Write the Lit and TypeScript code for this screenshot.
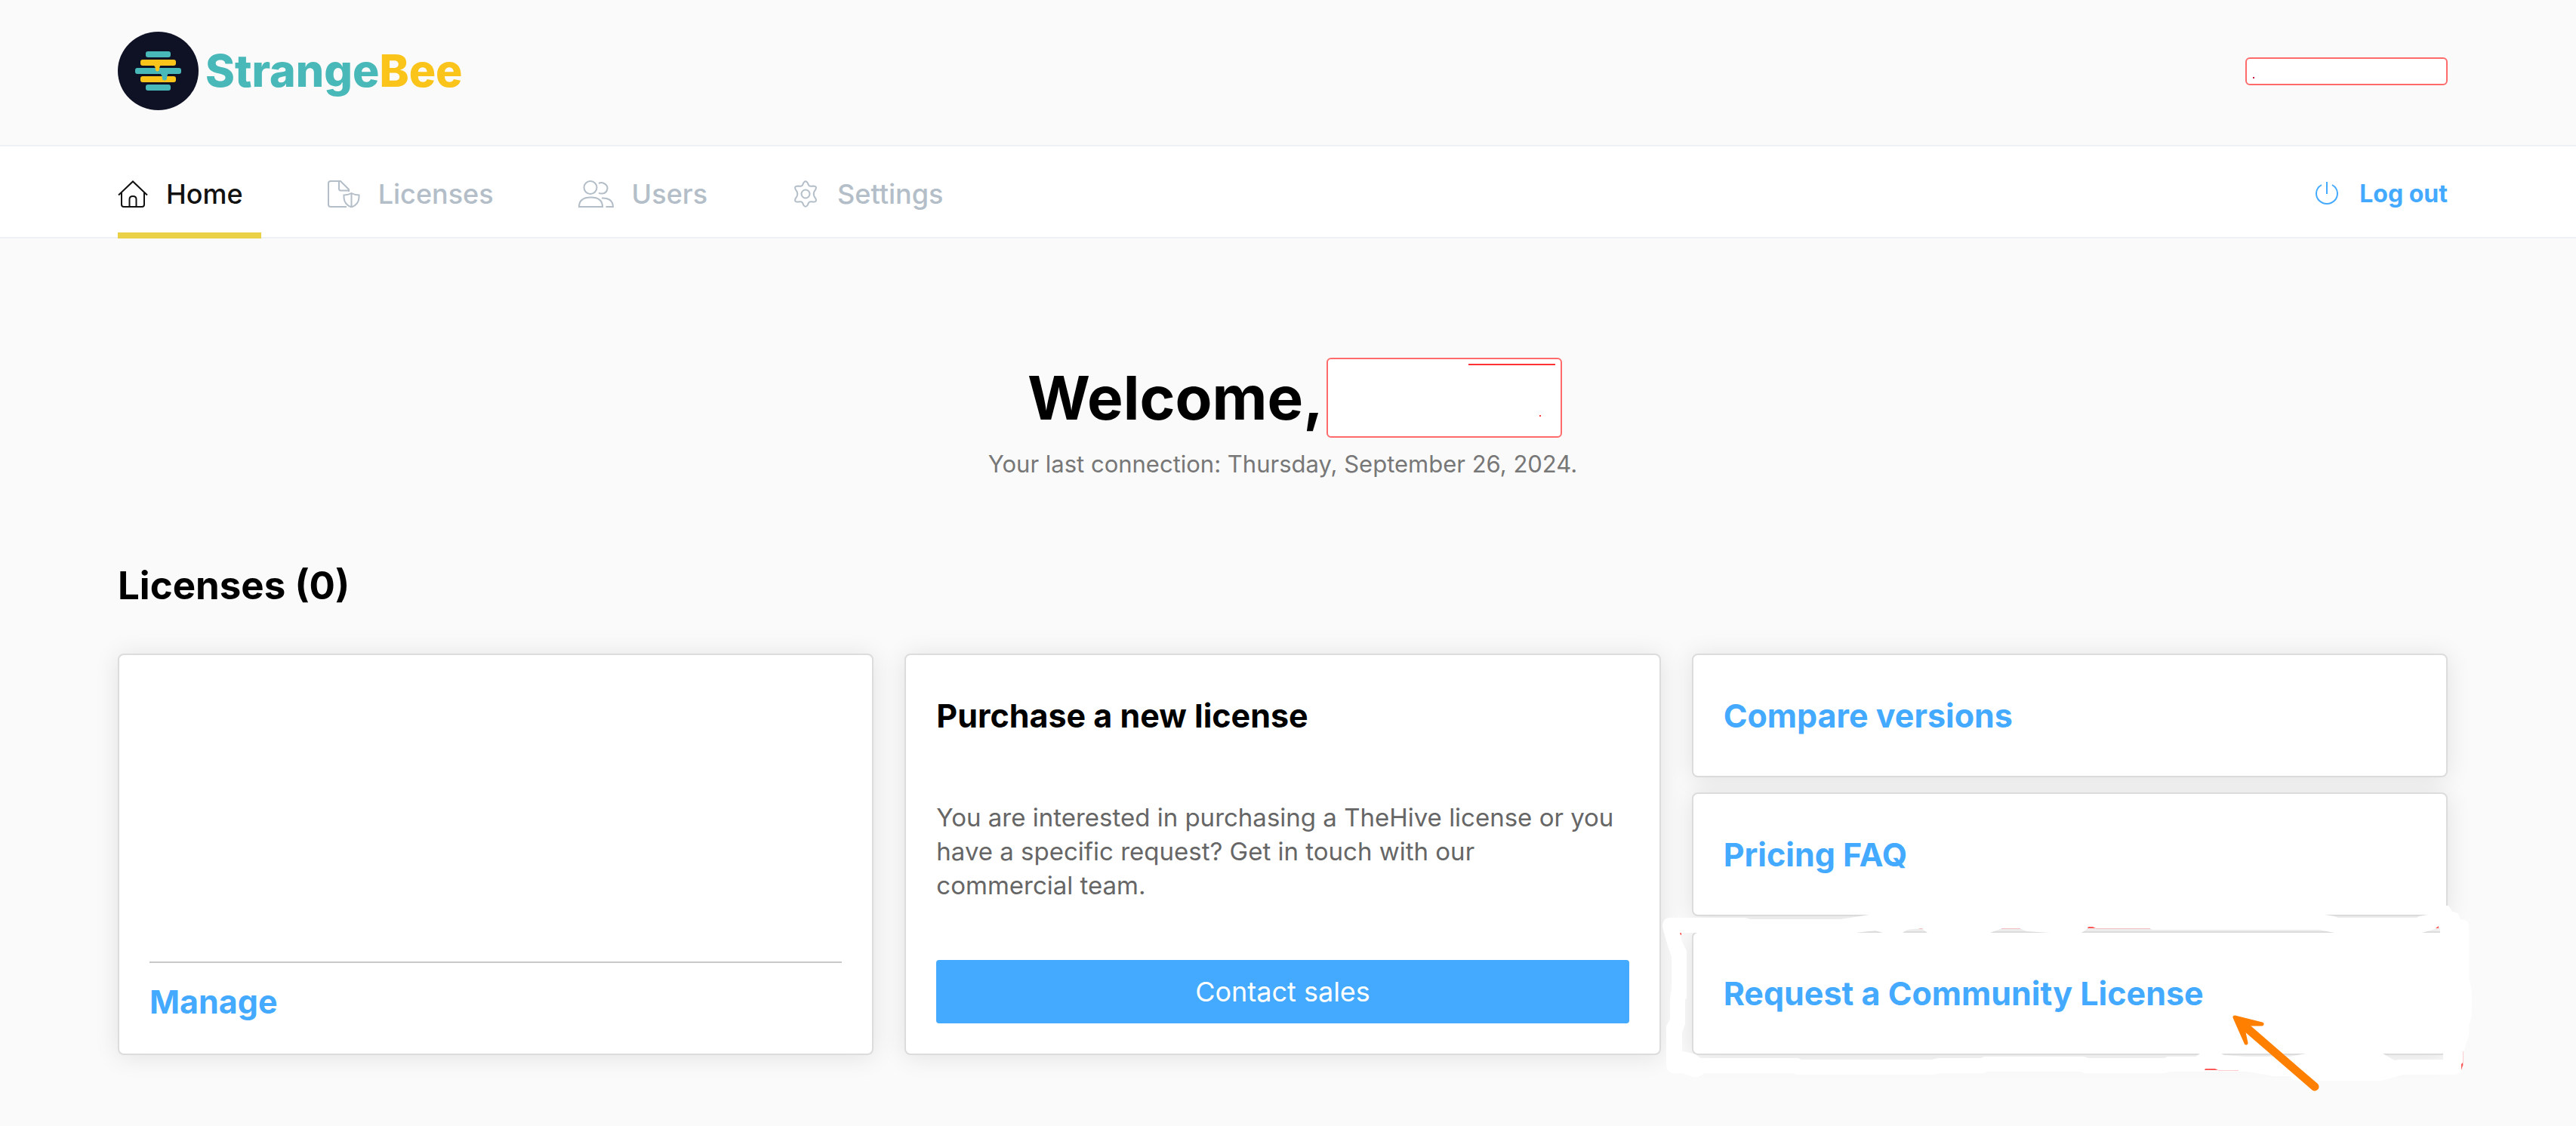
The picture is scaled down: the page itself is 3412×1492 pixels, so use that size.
import { LitElement, html, css, svg } from "lit";
import { customElement } from "lit/decorators.js";

const homeIcon = svg`<svg class="icon" width="40" height="36" viewBox="0 0 40 36" aria-hidden="true">
  <path d="M1 19.500 20 1.500 39 19.500M5 16.500V32q0 3 3 3H32q3 0 3-3V16.500M15.500 35V25q0-4 4.500-4t4.500 4V35"/></svg>`;

const licenseIcon = svg`<svg class="icon" width="43" height="36" viewBox="0 0 43 36" aria-hidden="true">
  <path d="M25 35H4q-3 0-3-3V4Q1 1 4 1H17L28 12V15M15 1V11q0 2.500 2.500 2.500H28M21.500 19.500Q27 19.500 31.500 17 36 19.500 41.500 19.500V23Q41 32 31.500 35.500 22 32 21.500 23ZM31.500 17V35.500"/></svg>`;

const usersIcon = svg`<svg class="icon" width="47" height="36" viewBox="0 0 47 36" aria-hidden="true">
  <ellipse cx="16" cy="9.500" rx="8.500" ry="8.500"/>
  <path d="M1 35Q1 22.500 16.500 22.500T32 35ZM27 4Q30 2.500 33 3.500 39 6 38.500 11 37.500 17.500 31 17.500 28.500 17.500 27 16.500M31 23.500Q45.500 23 46 35H36.500"/></svg>`;

const settingsIcon = svg`<svg class="icon" width="36" height="36" viewBox="0 0 36 36" aria-hidden="true">
  <circle cx="18" cy="18" r="5.500"/>
  <path d="M15.300 3.200Q18-.8 20.700 3.200L22 6.200Q23 8 25 7.800L28.500 7.400Q33.300 7.500 31.300 12L29.500 14.800Q28 18 29.500 21.200L31.300 24Q33.300 28.500 28.500 28.600L25 28.200Q23 28 22 29.800L20.700 32.800Q18 36.800 15.300 32.800L14 29.800Q13 28 11 28.200L7.500 28.600Q2.700 28.500 4.700 24L6.500 21.200Q8 18 6.500 14.800L4.700 12Q2.700 7.500 7.500 7.400L11 7.800Q13 8 14 6.200Z"/></svg>`;

const powerIcon = svg`<svg class="icon" width="30" height="30" viewBox="0 0 30 30" aria-hidden="true">
  <path d="M15 0V16M8 4Q1 8 1 15.500A14 13.500 0 0 0 29 15.500Q29 8 22 4"/></svg>`;

const logoMark = svg`<svg width="107" height="104" viewBox="0 0 107 104" aria-hidden="true">
  <ellipse cx="53.500" cy="52" rx="53.500" ry="52" fill="#0f1225"/>
  <g fill="#49b8b8">
    <rect x="37" y="26" width="33" height="8" rx="3"/>
    <rect x="23" y="48" width="61" height="8" rx="3"/>
    <rect x="37" y="70" width="33" height="8" rx="3"/>
  </g>
  <g fill="#fac41b">
    <rect x="30" y="37" width="47" height="8" rx="3"/>
    <rect x="30" y="59" width="47" height="8" rx="3"/>
    <path d="M47 44H57Q55 46 55 49V51Q52.500 54 50 51V49Q50 46 47 44Z"/>
  </g>
  <path d="M56 55H67Q65 58 65 61V63Q62 66 59 63V61Q59 58 56 55Z" fill="#49b8b8"/>
</svg>`;

@customElement("app-root")
export class AppRoot extends LitElement {
  static styles = css`
    :host {
      display: block;
      min-height: 100vh;
      background: #fafafa;
      color: #000;
      font-family: Inter, "Liberation Sans", sans-serif;
    }
    * { box-sizing: border-box; }
    h1, h2, h3, p { margin: 0; }
    a { color: #44aaff; text-decoration: none; }
    .icon { flex: none; fill: none; stroke: currentColor; stroke-width: 2; }
    .header, .nav, .main { padding-left: 156px; padding-right: 170px; }
    .header {
      display: flex;
      justify-content: space-between;
      align-items: center;
      padding-top: 42px;
      padding-bottom: 46px;
    }
    .logo { display: flex; align-items: center; gap: 9px; height: 104px; }
    .wordmark { font-size: 59px; font-weight: 800; line-height: 64px; color: #49b8b8; }
    .wordmark-end { color: #fac41b; }
    .blank { position: relative; background: #fff; border: 2px solid #ff6b6b; border-radius: 6px; }
    .blank-account { width: 268px; height: 37px; }
    .blank-name { width: 312px; height: 106px; }
    .speck { position: absolute; width: 2px; height: 2px; background: #c01840; }
    .speck-account { left: 8px; bottom: 7px; }
    .speck-name { right: 26px; bottom: 26px; background: #ff3b3b; }
    .dash { position: absolute; right: 7px; top: 6px; width: 115px; height: 2px; background: #ff3333; }
    .nav {
      display: flex;
      justify-content: space-between;
      background: #fff;
      border-top: 2px solid #edf1f5;
      border-bottom: 2px solid #edf1f5;
      height: 124px;
    }
    .tabs { display: flex; gap: 88px; }
    .tab {
      position: relative;
      display: flex;
      align-items: center;
      gap: 24px;
      padding: 6px 24px 0 0;
      font-size: 36px;
      font-weight: 500;
      color: #b3bec8;
    }
    .tab-active { color: #111; }
    .tab-active::after {
      content: "";
      position: absolute;
      left: 0;
      right: 0;
      bottom: -2px;
      height: 8px;
      background: #ead045;
    }
    .logout {
      display: flex;
      align-items: center;
      gap: 28px;
      padding: 4px 0 0;
      border: 0;
      background: none;
      font-family: inherit;
      font-size: 32px;
      font-weight: 700;
      color: #44aaff;
    }
    .main { padding-top: 158px; padding-bottom: 94px; }
    .welcome { display: flex; justify-content: center; align-items: center; gap: 4px; padding-left: 32px; }
    .welcome-text { font-size: 80px; font-weight: 700; line-height: 106px; }
    .last { margin-top: 15px; text-align: center; font-size: 31px; line-height: 40px; color: #777; }
    .section { margin-top: 111px; font-size: 51px; font-weight: 700; line-height: 60px; }
    .cards { display: grid; grid-template-columns: repeat(3, 1fr); gap: 41px; margin-top: 60px; }
    .card {
      position: relative;
      display: flex;
      flex-direction: column;
      padding: 56px 40px 40px;
      background: #fff;
      border: 2px solid #dcdcdc;
      border-radius: 8px;
      box-shadow: 0 2px 32px rgba(0, 0, 0, 0.1);
    }
    .card-title { font-size: 43px; font-weight: 700; line-height: 48px; }
    .links { display: flex; flex-direction: column; gap: 20px; }
    .card-link { padding-bottom: 56px; }
    .manage { margin-top: auto; padding: 27px 0 5px; border-top: 2px solid #c8c8c8; }
    .text { margin-top: 89px; padding-right: 18px; font-size: 33px; line-height: 45px; color: #666; }
    .sales {
      margin-top: auto;
      height: 84px;
      border: 0;
      border-radius: 4px;
      background: #44aaff;
      color: #fff;
      font-family: inherit;
      font-size: 36px;
      font-weight: 400;
    }
    .marks { position: absolute; left: -52px; top: -52px; pointer-events: none; }
  `;

  private marks() {
    return svg`<svg class="marks" width="1109" height="266" viewBox="2191 1184 1109 266" aria-hidden="true">
      <path fill="#fff" fill-rule="evenodd" d="M2202 1228Q2202 1216 2212 1216H2312L2318 1218H2438L2476 1212L2480 1209H3079V1212L3092 1214L3097 1216H3201L3204 1214L3216 1212L3232 1200H3243Q3246 1203 3248 1208Q3258 1208 3258 1218Q3270 1218 3270 1228V1296Q3274 1310 3274 1318V1340Q3274 1350 3270 1358V1372L3263 1395L3262 1412Q3260 1424 3252 1424H3182L3170 1428L3154 1432H3042Q3036 1432 3034 1426H3012L2990 1422L2975 1420H2874L2868 1422H2762L2755 1420H2632L2628 1422H2570L2560 1424H2380L2374 1422H2257Q2248 1430 2240 1426L2228 1422H2215Q2207 1420 2207 1410V1360L2212 1350V1324L2214 1310V1268L2208 1250Z
      M2225 1236L2228 1248 2234 1260V1322L2232 1325V1357L2228 1368V1393L2234 1394 2246 1397 2252 1402H2382L2386 1404H2558L2568 1402H2624L2628 1400H2760L2766 1402H2867L2871 1400H2908L2914 1396H2942L2946 1398 2974 1400H3033L3054 1396H3156L3172 1405 3178 1404H3236V1394H3232V1228L3222 1232 3208 1236H3092L3072 1232H2851L2847 1230H2765L2763 1232 2757 1236H2715L2684 1234 2675 1230H2652L2636 1236H2553L2545 1230 2526 1232 2520 1236H2494L2484 1233 2458 1236Z"/>
      <g fill="#ff5a5a">
        <path d="M2225 1236H2227V1239H2226ZM2766 1228H2772L2776 1230H2765ZM3230 1227V1230H3226ZM2921 1416H2934L2938 1418H2920ZM3262 1408V1412L3260 1418V1410Z"/>
        <path opacity=".3" d="M2542 1230H2547V1231H2542ZM2651 1230H2676V1231H2651ZM2776 1230H2848V1231H2776ZM2938 1418H2965V1419H2938ZM3262 1393H3263V1412H3262Z"/>
      </g>
      <path d="M2977 1363 3066 1440" fill="none" stroke="#ff8000" stroke-width="11" stroke-linecap="round"/>
      <path d="M2960 1348 2996 1357 2972 1357 2971 1363 2975 1382Z" fill="#ff8000" stroke="#ff8000" stroke-width="5" stroke-linejoin="round"/>
    </svg>`;
  }

  render() {
    return html`
      <header class="header">
        <div class="logo">
          ${logoMark}
          <span class="wordmark">Strange<span class="wordmark-end">Bee</span></span>
        </div>
        <div class="blank blank-account"><span class="speck speck-account"></span></div>
      </header>
      <nav class="nav">
        <div class="tabs">
          <a class="tab tab-active" href="#home">${homeIcon}<span>Home</span></a>
          <a class="tab" href="#licenses">${licenseIcon}<span>Licenses</span></a>
          <a class="tab" href="#users">${usersIcon}<span>Users</span></a>
          <a class="tab" href="#settings">${settingsIcon}<span>Settings</span></a>
        </div>
        <button class="logout" type="button">${powerIcon}<span>Log out</span></button>
      </nav>
      <main class="main">
        <div class="welcome">
          <h1 class="welcome-text">Welcome,</h1>
          <div class="blank blank-name"><span class="dash"></span><span class="speck speck-name"></span></div>
        </div>
        <p class="last">Your last connection: Thursday, September 26, 2024.</p>
        <h2 class="section">Licenses (0)</h2>
        <div class="cards">
          <section class="card">
            <a class="card-title manage" href="#manage">Manage</a>
          </section>
          <section class="card">
            <h3 class="card-title">Purchase a new license</h3>
            <p class="text">You are interested in purchasing a TheHive license or you have a specific request? Get in touch with our commercial team.</p>
            <button class="sales" type="button">Contact sales</button>
          </section>
          <div class="links">
            <div class="card card-link"><a class="card-title" href="#compare">Compare versions</a></div>
            <div class="card card-link"><a class="card-title" href="#faq">Pricing FAQ</a></div>
            <div class="card card-link">
              <a class="card-title" href="#community">Request a Community License</a>
              ${this.marks()}
            </div>
          </div>
        </div>
      </main>
    `;
  }
}
